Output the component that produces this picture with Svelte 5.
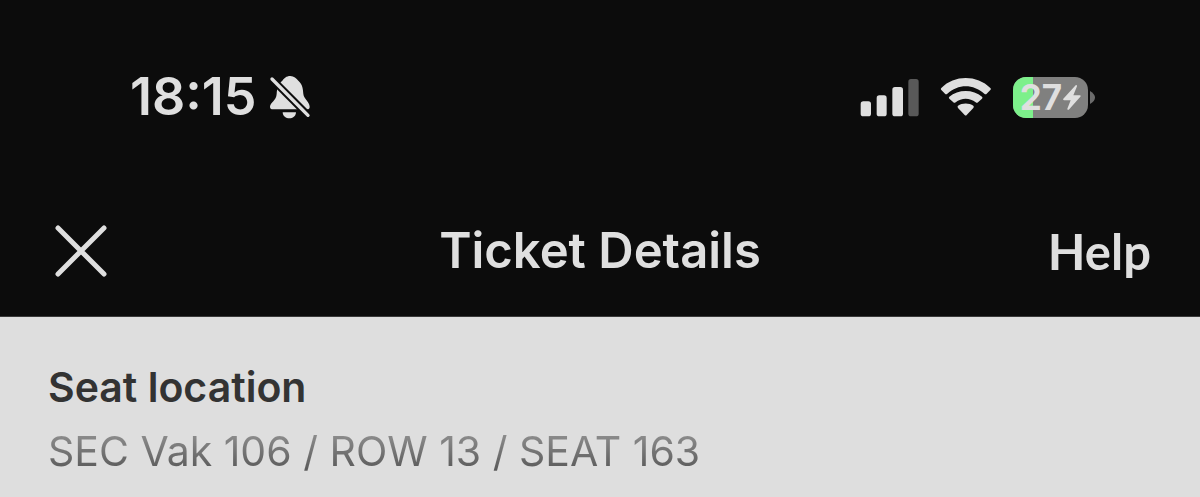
<script lang="ts">
    let time = '18:15';
    let battery = 27;
    let title = 'Ticket Details';
    let seat = { section: 'Vak 106', row: '13', seat: '163' };
</script>

<svelte:head>
    <title>Ticket Details</title>
</svelte:head>

<div class="screen">
    <div class="status-bar">
        <div class="clock">
            <span>{time}</span>
            <svg class="bell" viewBox="444 30 126 138" aria-hidden="true">
                <path d="M508 36C519 36 526 43 532 50C545 61 546 76 547 90C549 106 566 114 566 128Q566 136 558 136H456Q447 136 447 128C448 115 466 110 467 90C468 70 472 60 484 50C489 43 496 36 508 36Z" />
                <path d="M485 145H525C524 169 486 169 485 145Z" />
                <path class="gap" d="M447 39L572 165" />
                <path class="slash" d="M453 45L561 154" />
            </svg>
        </div>
        <div class="indicators">
            <svg class="signal" viewBox="30 38 177 117" aria-hidden="true">
                <rect x="32" y="108" width="31" height="45" rx="8" />
                <rect x="80" y="90" width="30" height="63" rx="8" />
                <rect x="127" y="65" width="32" height="88" rx="8" />
                <rect class="off" x="175" y="41" width="31" height="112" rx="8" />
            </svg>
            <svg class="wifi" viewBox="270 36 156 120" aria-hidden="true">
                <path d="M274 69C313 29 381 29 421 69Q424 72 421 75L410 86Q407 89 403 86C370 56 324 56 292 86Q288 89 285 86L274 75Q271 72 274 69Z" />
                <path d="M298 95C324 72 370 72 396 95Q399 98 396 101L384 112Q381 115 377 112C360 98 334 98 317 112Q313 115 310 112L298 101Q295 98 298 95Z" />
                <path d="M324 122C336 113 358 113 370 122Q373 125 370 129L350 150Q347 153 344 150L324 129Q321 125 324 122Z" />
            </svg>
            <div class="battery">
                <div class="cell">
                    <div class="level" style={`width: ${battery}%;`}></div>
                    <span>{battery}</span>
                    <svg class="bolt" viewBox="640 60 54 80" aria-hidden="true">
                        <path d="M678 63L641 104Q639 108 644 108H663L653 134Q653 139 658 136L692 98Q695 93 690 93H671L682 66Q682 61 678 63Z" />
                    </svg>
                </div>
                <svg class="cap" viewBox="0 0 5 13" aria-hidden="true">
                    <path d="M0 0Q5 3 5 6.500Q5 10 0 13Z" />
                </svg>
            </div>
        </div>
    </div>
    <header class="nav">
        <button class="close" type="button" aria-label="Close">
            <svg viewBox="0 0 52 52" aria-hidden="true">
                <path d="M3 3L49 49M49 3L3 49" />
            </svg>
        </button>
        <h1>{title}</h1>
        <a class="help" href="#help">Help</a>
    </header>
    <main class="details">
        <h2>Seat location</h2>
        <p>SEC {seat.section} / ROW {seat.row} / SEAT {seat.seat}</p>
    </main>
</div>

<style>
    :global(body) {
        margin: 0;
        background: #dedede;
    }
    .screen {
        font-family: 'Inter', sans-serif;
        color: #dfdfdf;
    }
    svg {
        display: block;
        flex: none;
        fill: #dfdfdf;
    }
    /* status bar */
    .status-bar {
        display: flex;
        align-items: center;
        justify-content: space-between;
        padding: 67px 105px 69px 130px;
        background: #0c0c0c;
    }
    .clock {
        display: flex;
        align-items: center;
        gap: 12px;
        font-size: 52px;
        line-height: 60px;
        font-weight: 600;
    }
    .bell {
        width: 42px;
        height: 46px;
    }
    .bell .gap {
        stroke: #0c0c0c;
        stroke-width: 22;
    }
    .bell .slash {
        stroke: #dfdfdf;
        stroke-width: 10;
        stroke-linecap: round;
    }
    .indicators {
        display: flex;
        align-items: center;
        gap: 21px;
    }
    .signal {
        width: 59px;
        height: 39px;
    }
    .signal .off {
        fill: #595959;
    }
    .wifi {
        width: 52px;
        height: 40px;
    }
    .battery {
        display: flex;
        align-items: center;
        gap: 2px;
    }
    .cell {
        position: relative;
        display: flex;
        align-items: center;
        justify-content: center;
        gap: 1px;
        width: 75px;
        height: 41px;
        border-radius: 13px;
        overflow: hidden;
        background: #80807f;
        font-size: 35px;
        line-height: 40px;
        font-weight: 700;
    }
    .cell span,
    .bolt {
        position: relative;
    }
    .level {
        position: absolute;
        top: 0;
        bottom: 0;
        left: 0;
        background: #7df08b;
    }
    .bolt {
        width: 18px;
        height: 27px;
    }
    .cap {
        width: 5px;
        height: 13px;
        fill: #6c6c6c;
    }
    /* navigation */
    .nav {
        display: grid;
        grid-template-columns: 1fr auto 1fr;
        align-items: center;
        padding: 25px 49px 35px;
        border-bottom: 1px solid #3a3a3a;
        background: #0c0c0c;
    }
    .close {
        justify-self: start;
        padding: 0 6px;
        border: 0;
        background: none;
        cursor: pointer;
    }
    .close svg {
        width: 52px;
        height: 52px;
        stroke: #dfdfdf;
        stroke-width: 5;
        stroke-linecap: round;
    }
    h1 {
        margin: 0;
        font-size: 49px;
        line-height: 60px;
        font-weight: 600;
    }
    .help {
        justify-self: end;
        color: inherit;
        font-family: 'Lato', sans-serif;
        font-size: 49px;
        line-height: 60px;
        font-weight: 700;
        text-decoration: none;
    }
    /* seat details */
    .details {
        padding: 44px 48px 20px;
        background: #dedede;
    }
    h2 {
        margin: 0 0 12px;
        color: #333;
        font-size: 41px;
        line-height: 52px;
        font-weight: 600;
    }
    p {
        width: fit-content;
        margin: 0;
        background: linear-gradient(#9a9a9a, #505050);
        background-clip: text;
        color: transparent;
        font-size: 41px;
        line-height: 52px;
        font-weight: 400;
    }
</style>
